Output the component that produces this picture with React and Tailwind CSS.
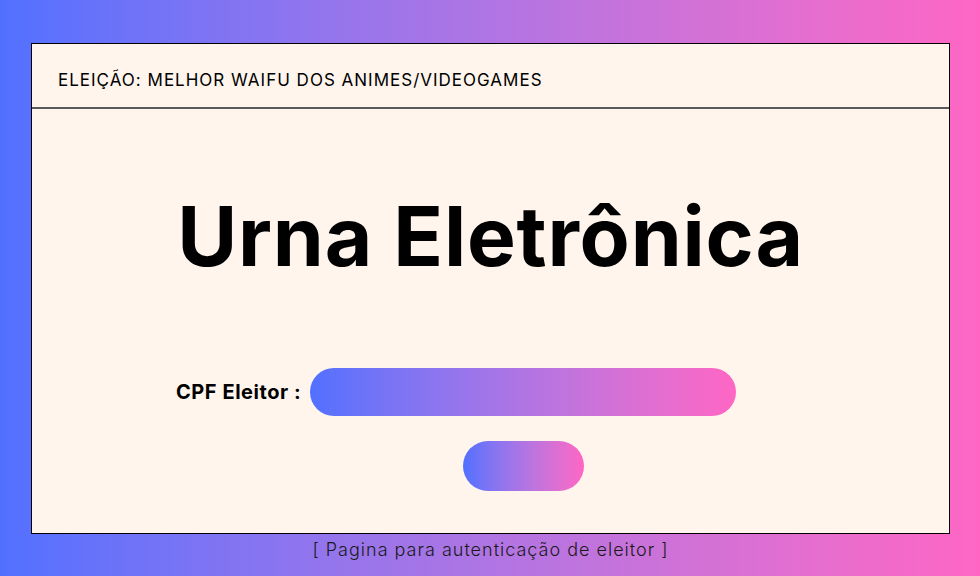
import React from "react";

export default function App() {
  return (
    <div className="w-[980px] h-[576px] overflow-hidden bg-gradient-to-r from-[#5170ff] to-[#ff66c4] pt-[43px] pl-[31px] font-['Inter',sans-serif]">
      <div className="w-[919px] h-[491px] border border-black bg-[#fff5ec] flex flex-col">
        <div className="h-[65px] shrink-0 flex items-center pl-[26px] pt-[9px] border-b-2 border-[#5a5a5a]">
          <span className="text-[17px] leading-none text-black tracking-[1px]">
            ELEIÇÃO: MELHOR WAIFU DOS ANIMES/VIDEOGAMES
          </span>
        </div>
        <div className="flex flex-col items-center">
          <h1 className="mt-[87px] text-[82px] leading-none font-bold text-black tracking-[0.8px]">
            Urna Eletrônica
          </h1>
          <div className="mt-[90px] flex items-center w-full pl-[144px]">
            <span className="text-[20px] font-bold text-black tracking-[0.55px] mr-[9px]">CPF Eleitor :</span>
            <div className="w-[426px] h-[48px] rounded-full bg-gradient-to-r from-[#5170ff] to-[#ff66c4]"></div>
          </div>
          <div className="mt-[25px] w-[121px] h-[50px] rounded-full bg-gradient-to-r from-[#5170ff] to-[#ff66c4] ml-[66px]"></div>
        </div>
      </div>
      <div className="w-[919px] text-center mt-[7px] text-[18px] leading-none text-[#1a1a1a] font-light tracking-[1px]">
        [ Pagina para autenticação de eleitor ]
      </div>
    </div>
  );
}
